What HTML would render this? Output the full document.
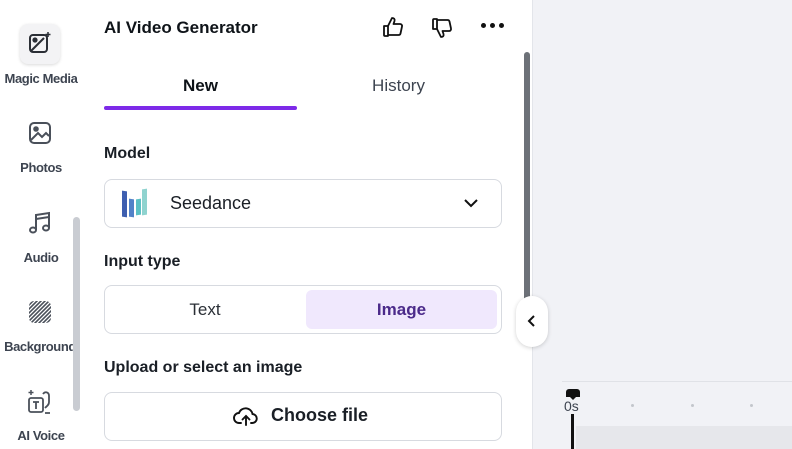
<!DOCTYPE html>
<html><head><meta charset="utf-8"><style>
*{margin:0;padding:0;box-sizing:border-box}
body{width:792px;height:449px;overflow:hidden;background:#fff;font-family:"Liberation Sans",sans-serif;color:#0e1318;position:relative}
.abs{position:absolute}
.side{left:0;top:0;width:82px;height:449px;background:#fff}
.lbl{position:absolute;width:82px;text-align:center;font-size:13px;color:#3d4450;font-weight:bold;letter-spacing:-0.4px;white-space:nowrap}
.ico{position:absolute;left:27px;width:26px;height:26px}
.panel{left:82px;top:0;width:450px;height:449px;background:#fff}
.h{font-size:17px;font-weight:bold}
.sec{font-size:16px;font-weight:bold;color:#1a1f26}
.box{border:1px solid #d7dae0;border-radius:8px;background:#fff}
.right{left:532px;top:0;width:260px;height:449px;background:#f1f2f6;border-left:1px solid #e3e5ea}
</style></head><body>
<div class="abs side">
  <div class="abs" style="left:20px;top:24px;width:40px;height:40px;border-radius:8px;background:#f3f3f5;box-shadow:0 1px 3px rgba(0,0,0,.15)"></div>
  <svg class="ico" style="left:28px;top:31px;width:24px;height:24px" viewBox="0 0 24 24" fill="none" stroke="#2b2f36" stroke-width="2"><rect x="2" y="4" width="17" height="17" rx="3"/><circle cx="7" cy="9" r="1.6" fill="#2b2f36"/><path d="M3 20L16 7"/><path d="M20 1v5M17.5 3.5h5" stroke-width="1.5"/></svg>
  <div class="lbl" style="top:71px">Magic Media</div>
  <svg class="ico" style="top:121px;width:24px;height:24px;left:28px" viewBox="0 0 24 24" fill="none" stroke="#4a505a" stroke-width="2"><rect x="2" y="2" width="20" height="20" rx="4"/><circle cx="8" cy="8" r="1.8" fill="#4a505a"/><path d="M3 19l7-7 4 4 4-4 3 3"/></svg>
  <div class="lbl" style="top:160px">Photos</div>
  <svg class="ico" style="top:210px;width:24px;height:26px;left:28px" viewBox="0 0 24 26" fill="none" stroke="#4a505a" stroke-width="2"><path d="M8 20V5l13-2v15"/><path d="M8 9l13-2"/><ellipse cx="5" cy="20" rx="3" ry="2.5"/><ellipse cx="18" cy="18" rx="3" ry="2.5"/></svg>
  <div class="lbl" style="top:250px">Audio</div>
  <svg class="ico" style="top:300px;width:24px;height:24px;left:28px" viewBox="0 0 24 24"><defs><clipPath id="c"><rect x="1" y="1" width="22" height="22" rx="5"/></clipPath></defs><g clip-path="url(#c)" stroke="#4a505a" stroke-width="1.6"><path d="M-4 6L6-4M-4 10L10-4M-4 14L14-4M-4 18L18-4M-4 22L22-4M-4 26L26-4M0 26L26 0M4 26L26 4M8 26L26 8M12 26L26 12M16 26L26 16M20 26L26 20"/></g></svg>
  <div class="lbl" style="top:339px;left:-1px">Background</div>
  <svg class="ico" style="top:388px;width:26px;height:28px;left:26px" viewBox="0 0 26 28" fill="none" stroke="#4a505a" stroke-width="1.8"><rect x="3" y="10" width="14" height="14" rx="2"/><path d="M7 14h6M10 14v7"/><path d="M5 2v5M2.5 4.5h5" stroke-width="1.5"/><path d="M17 6c2-3 6-2 6 2v6c0 3-2 4-4 6M19 25h5"/></svg>
  <div class="lbl" style="top:428px">AI Voice</div>
  <div class="abs" style="left:73px;top:217px;width:7px;height:194px;border-radius:4px;background:#c9ccd2"></div>
</div>
<div class="abs panel">
  <div class="abs h" style="left:22px;top:18px">AI Video Generator</div>
  <svg class="abs" style="left:299px;top:15px" width="24" height="24" viewBox="0 0 24 24" fill="none" stroke="#111" stroke-width="1.8" stroke-linejoin="round"><path d="M3 11h4v10H4a1 1 0 0 1-1-1z"/><path d="M7 11l4-8c2 0 3 1 2.5 3L12.5 9H19a2 2 0 0 1 2 2.5l-1.5 7A2 2 0 0 1 17.5 20H7"/></svg>
  <svg class="abs" style="left:348px;top:16px;transform:scaleY(-1)" width="24" height="24" viewBox="0 0 24 24" fill="none" stroke="#111" stroke-width="1.8" stroke-linejoin="round"><path d="M3 11h4v10H4a1 1 0 0 1-1-1z"/><path d="M7 11l4-8c2 0 3 1 2.5 3L12.5 9H19a2 2 0 0 1 2 2.5l-1.5 7A2 2 0 0 1 17.5 20H7"/></svg>
  <div class="abs" style="left:399px;top:23px;width:24px;font-size:0;white-space:nowrap">
    <span style="display:inline-block;width:5px;height:5px;border-radius:50%;background:#111;margin-right:4px"></span><span style="display:inline-block;width:5px;height:5px;border-radius:50%;background:#111;margin-right:4px"></span><span style="display:inline-block;width:5px;height:5px;border-radius:50%;background:#111"></span>
  </div>
  <div class="abs" style="left:22px;top:76px;width:193px;text-align:center;font-size:17px;font-weight:bold">New</div>
  <div class="abs" style="left:22px;top:106px;width:193px;height:4px;border-radius:2px;background:#7d2ae8"></div>
  <div class="abs" style="left:220px;top:76px;width:193px;text-align:center;font-size:17px;color:#3d4450">History</div>
  <div class="abs sec" style="left:22px;top:145px">Model</div>
  <div class="abs box" style="left:22px;top:179px;width:398px;height:49px"></div>
  <div class="abs" style="left:40px;top:191px;width:5px;height:26px;background:#3e5fb0;transform:skewY(8deg)"></div>
  <div class="abs" style="left:47px;top:199px;width:5px;height:18px;background:#5282c8;transform:skewY(8deg)"></div>
  <div class="abs" style="left:54px;top:199px;width:5px;height:16px;background:#5cc0c4;transform:skewY(-8deg)"></div>
  <div class="abs" style="left:60px;top:189px;width:5px;height:26px;background:#8fd3cf;transform:skewY(-8deg)"></div>
  <div class="abs" style="left:88px;top:193px;font-size:18px;color:#1a1f26">Seedance</div>
  <svg class="abs" style="left:380px;top:196px" width="18" height="14" viewBox="0 0 18 14" fill="none" stroke="#111" stroke-width="2"><path d="M3 4l6 6 6-6"/></svg>
  <div class="abs sec" style="left:22px;top:253px">Input type</div>
  <div class="abs box" style="left:22px;top:285px;width:398px;height:49px"></div>
  <div class="abs" style="left:224px;top:290px;width:191px;height:39px;border-radius:6px;background:#f0e8fd"></div>
  <div class="abs" style="left:22px;top:300px;width:202px;text-align:center;font-size:17px;color:#2a2f36">Text</div>
  <div class="abs" style="left:224px;top:300px;width:191px;text-align:center;font-size:17px;color:#4b2a8a;font-weight:bold">Image</div>
  <div class="abs sec" style="left:22px;top:359px">Upload or select an image</div>
  <div class="abs box" style="left:22px;top:392px;width:398px;height:49px"></div>
  <svg class="abs" style="left:151px;top:405px" width="26" height="22" viewBox="0 0 26 22" fill="none" stroke="#111" stroke-width="1.9" stroke-linecap="round"><path d="M8 18H6a5 5 0 0 1 0-10 7 7 0 0 1 13.5 1A4.5 4.5 0 0 1 19 18h-1"/><path d="M13 20v-9M9.5 14.5L13 11l3.5 3.5"/></svg>
  <div class="abs" style="left:189px;top:405px;font-size:18px;font-weight:bold;color:#1a1f26">Choose file</div>
  <div class="abs" style="left:442px;top:52px;width:6px;height:250px;border-radius:3px;background:#6d7178"></div>
</div>
<div class="abs right">
  <div class="abs" style="left:29px;top:381px;width:231px;height:1px;background:#e0e2e7"></div>
  <div class="abs" style="left:43px;top:426px;width:217px;height:23px;background:#e6e7eb"></div>
  <div class="abs" style="left:33px;top:389px;width:14px;height:8px;border-radius:3px 3px 0 0;background:#111"></div>
  <div class="abs" style="left:36px;top:396px;width:0;height:0;border-left:4px solid transparent;border-right:4px solid transparent;border-top:4px solid #111"></div>
  <div class="abs" style="left:31px;top:398px;font-size:14px;color:#3d4450">0s</div>
  <div class="abs" style="left:38px;top:414px;width:3px;height:35px;background:#111"></div>
  <div class="abs" style="left:98px;top:404px;width:3px;height:3px;border-radius:50%;background:#c3c6cc"></div>
  <div class="abs" style="left:158px;top:404px;width:3px;height:3px;border-radius:50%;background:#c3c6cc"></div>
  <div class="abs" style="left:217px;top:404px;width:3px;height:3px;border-radius:50%;background:#c3c6cc"></div>
</div>
<div class="abs" style="left:516px;top:296px;width:32px;height:51px;border-radius:16px;background:#fff;box-shadow:0 1px 4px rgba(0,0,0,.18)"></div>
<svg class="abs" style="left:524px;top:313px" width="16" height="16" viewBox="0 0 16 16" fill="none" stroke="#111" stroke-width="2"><path d="M10 3L5 8l5 5"/></svg>
</body></html>
